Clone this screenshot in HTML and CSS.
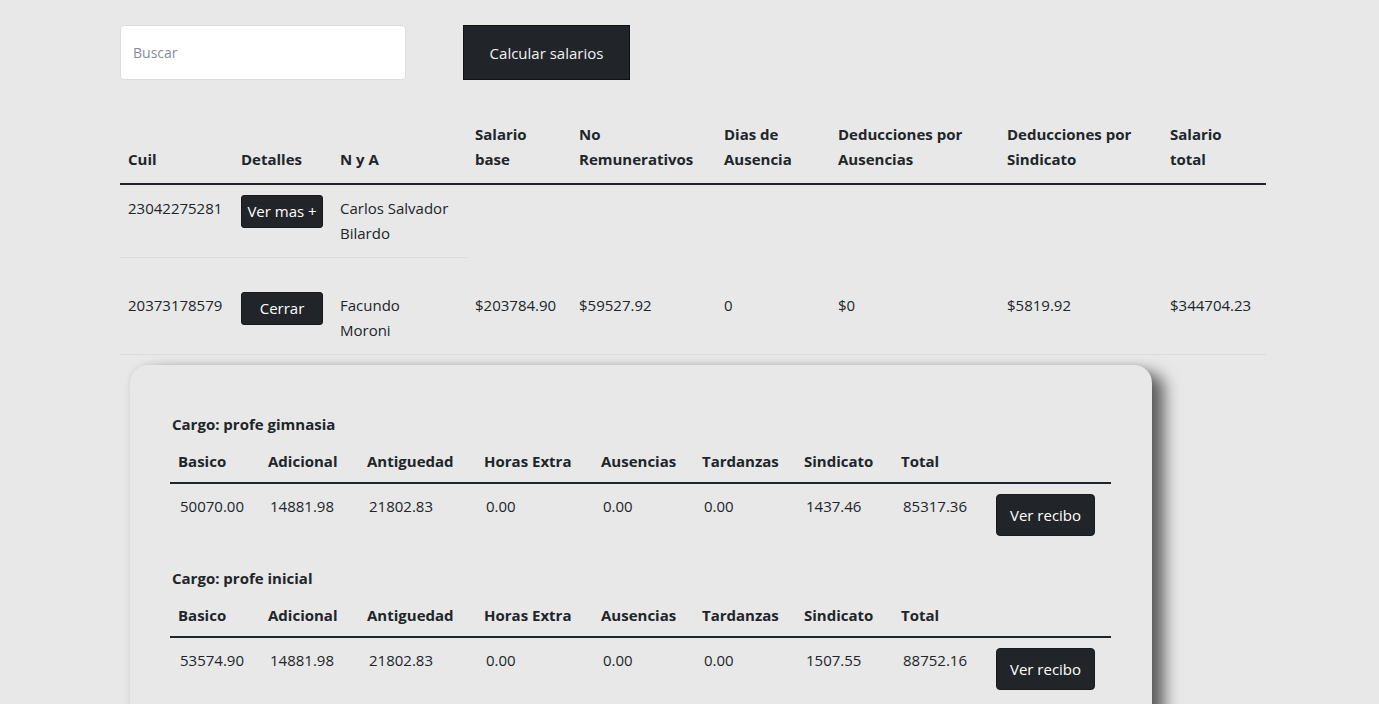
FILE: index.html
```html
<!DOCTYPE html>
<html lang="es">
<head>
<meta charset="utf-8">
<title>Salarios</title>
<link rel="stylesheet" href="styles.css">
</head>
<body>
<div class="page">
  <div class="toolbar">
    <input class="search" type="text" placeholder="Buscar">
    <button class="calc">Calcular salarios</button>
  </div>

  <table class="main">
    <colgroup>
      <col style="width:113px"><col style="width:99px"><col style="width:135px"><col style="width:104px"><col style="width:145px"><col style="width:114px"><col style="width:169px"><col style="width:163px"><col style="width:104px">
    </colgroup>
    <thead>
      <tr>
        <th>Cuil</th>
        <th>Detalles</th>
        <th>N y A</th>
        <th>Salario<br>base</th>
        <th>No<br>Remunerativos</th>
        <th>Dias de<br>Ausencia</th>
        <th>Deducciones por<br>Ausencias</th>
        <th>Deducciones por<br>Sindicato</th>
        <th>Salario<br>total</th>
      </tr>
    </thead>
    <tbody>
      <tr class="row-short">
        <td>23042275281</td>
        <td><button class="btn-small">Ver mas +</button></td>
        <td>Carlos Salvador<br>Bilardo</td>
      </tr>
      <tr class="row-open">
        <td>20373178579</td>
        <td><button class="btn-small">Cerrar</button></td>
        <td>Facundo<br>Moroni</td>
        <td>$203784.90</td>
        <td>$59527.92</td>
        <td>0</td>
        <td>$0</td>
        <td>$5819.92</td>
        <td>$344704.23</td>
      </tr>
      <tr class="row-detail">
        <td colspan="9">
          <div class="card">
            <div class="cargo">
              <div class="cargo-title">Cargo: profe gimnasia</div>
              <table class="inner">
                <colgroup>
                  <col style="width:90px"><col style="width:99px"><col style="width:117px"><col style="width:117px"><col style="width:101px"><col style="width:102px"><col style="width:97px"><col style="width:91px"><col style="width:127px">
                </colgroup>
                <thead>
                  <tr><th>Basico</th><th>Adicional</th><th>Antiguedad</th><th>Horas Extra</th><th>Ausencias</th><th>Tardanzas</th><th>Sindicato</th><th>Total</th><th></th></tr>
                </thead>
                <tbody>
                  <tr><td>50070.00</td><td>14881.98</td><td>21802.83</td><td>0.00</td><td>0.00</td><td>0.00</td><td>1437.46</td><td>85317.36</td><td><button class="btn-recibo">Ver recibo</button></td></tr>
                </tbody>
              </table>
            </div>
            <div class="cargo">
              <div class="cargo-title">Cargo: profe inicial</div>
              <table class="inner">
                <colgroup>
                  <col style="width:90px"><col style="width:99px"><col style="width:117px"><col style="width:117px"><col style="width:101px"><col style="width:102px"><col style="width:97px"><col style="width:91px"><col style="width:127px">
                </colgroup>
                <thead>
                  <tr><th>Basico</th><th>Adicional</th><th>Antiguedad</th><th>Horas Extra</th><th>Ausencias</th><th>Tardanzas</th><th>Sindicato</th><th>Total</th><th></th></tr>
                </thead>
                <tbody>
                  <tr><td>53574.90</td><td>14881.98</td><td>21802.83</td><td>0.00</td><td>0.00</td><td>0.00</td><td>1507.55</td><td>88752.16</td><td><button class="btn-recibo">Ver recibo</button></td></tr>
                </tbody>
              </table>
            </div>
          </div>
        </td>
      </tr>
    </tbody>
  </table>
</div>
</body>
</html>
```

FILE: styles.css
```css
html, body {
  margin: 0;
  padding: 0;
  background: #e8e8e8;
}

body {
  font-family: "Open Sans", "Noto Sans", sans-serif;
  font-size: 15px;
  line-height: 25px;
  color: #212529;
  overflow: hidden;
}

.page {
  width: 1146px;
  margin-left: 120px;
  padding-top: 25px;
}

.toolbar {
  display: flex;
  align-items: stretch;
  gap: 57px;
  height: 55px;
}

.search {
  width: 286px;
  box-sizing: border-box;
  border: 1px solid #dcdcdc;
  border-radius: 4px;
  background: #ffffff;
  padding: 0 12px;
  font-family: inherit;
  font-size: 14px;
  color: #212529;
  outline: none;
}

.search::placeholder {
  color: #848c96;
}

.calc {
  width: 167px;
  box-sizing: border-box;
  background: #212529;
  border: 1px solid #111;
  border-radius: 0;
  color: #f2f2f2;
  font-family: inherit;
  font-size: 15px;
  padding: 0;
}

table {
  border-collapse: collapse;
  table-layout: fixed;
}

.main {
  width: 1146px;
  margin-top: 34px;
}

.main th {
  text-align: left;
  vertical-align: bottom;
  font-weight: 700;
  padding: 8px 8px 11px 8px;
  border-bottom: 2px solid #212529;
}

.main td {
  text-align: left;
  vertical-align: top;
  padding: 11px 8px 11px 8px;
  border-bottom: 1px solid #dcdcdc;
  white-space: nowrap;
}

.main .row-open td {
  padding-top: 35px;
}

.main .row-detail td {
  padding: 10px 0 0 10px;
  border-bottom: none;
}

.btn-small {
  display: block;
  width: 82px;
  height: 33px;
  margin-top: -1px;
  box-sizing: border-box;
  background: #212529;
  border: 1px solid #1a1a1a;
  border-radius: 3px;
  color: #ffffff;
  font-family: inherit;
  font-size: 15px;
  padding: 0;
  line-height: 31px;
}

.card {
  width: 1022px;
  box-sizing: border-box;
  border-radius: 18px;
  background: #e8e8e8;
  padding: 47px 41px 40px 40px;
  box-shadow: 14px 6px 16px -2px rgba(0, 0, 0, 0.6), 0 0 6px rgba(0, 0, 0, 0.1);
}

.cargo {
  margin-bottom: 30px;
}

.cargo-title {
  font-weight: 700;
  padding-left: 2px;
  margin-bottom: 4px;
}

.inner {
  width: 941px;
}

.inner th {
  text-align: left;
  font-weight: 700;
  padding: 8px;
  border-bottom: 2px solid #212529;
  white-space: nowrap;
}

.inner td {
  text-align: left;
  vertical-align: top;
  padding: 4px 8px 8px 6px;
  border-bottom: 1px solid #dcdcdc;
  white-space: nowrap;
}

.btn-recibo {
  display: block;
  width: 99px;
  height: 42px;
  margin-top: 0;
  margin-left: 2px;
  box-sizing: border-box;
  background: #212529;
  border: 1px solid #1a1a1a;
  border-radius: 4px;
  color: #ffffff;
  font-family: inherit;
  font-size: 15px;
  line-height: 40px;
  padding: 0;
}
```
